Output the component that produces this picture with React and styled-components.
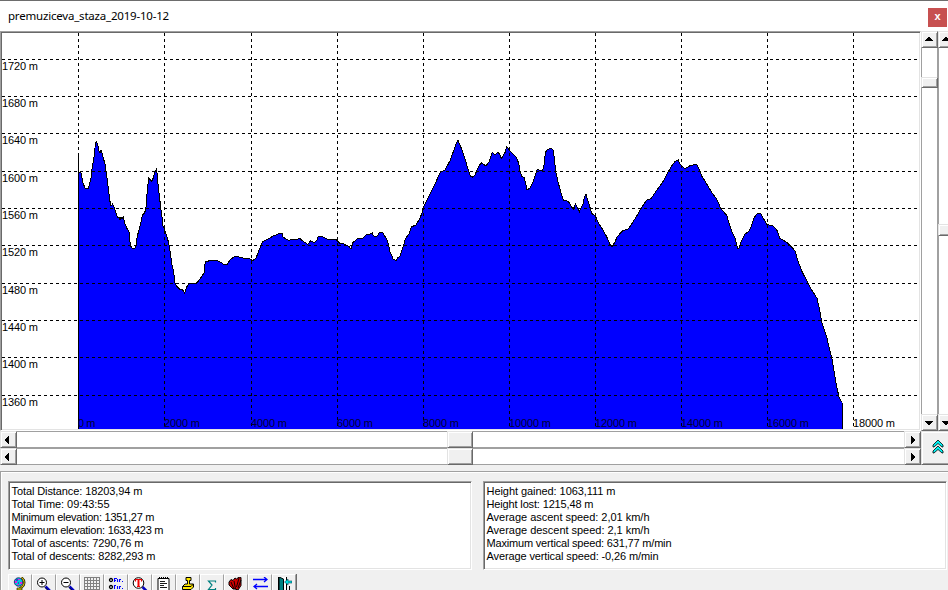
import React from "react";
import styled, { createGlobalStyle, css } from "styled-components";

const X_TICKS = [78, 164, 251, 337, 423, 509, 595, 681, 767, 853];
const Y_TICKS = [59, 96, 133, 171, 208, 245, 283, 320, 357, 395];
const TOP_ELEVATION = 1720;

const PROFILE = `79,172 81,173 83,183 85,188 88,189 89,186 91,178 92,169 94,157 95.5,143 96.5,141.5 98,146
 99,151 100,153 101,150 102,153 103.3,158 105,164 106.7,176 108.3,188 109.7,200 111,206 112.7,204 114,207 116,213
 117.3,217 119,217 120,220 121,217 122,219 123.3,217 125,224 126.7,228 129,232 130.3,245 131.7,248 134.7,249 136,245
 137.3,236 139,230 140.7,224 142.3,215 144.7,213 146,207 147.3,190 148.7,178 151.7,181 153.3,178
 154.7,172 156.7,168.5 157.3,177 158.7,190 160.3,204 162,217 163,226 164.7,230 166.7,236 168.7,243
 170.3,253 172,265 173.7,272 175,283 176.7,286 179.3,289 182.7,290 184.7,293 186.7,287 188.7,284
 196.7,283 200,279 204,273 205.3,262 211.7,260 216.7,260 223.3,264 226.7,265 230,260 235,256
 243,258 250,259 252.7,260.7 256,258.3 258.7,250.7 261.3,245 262.7,241.7 268.3,239 273.3,236
 278.3,234 282.3,233.3 283,237 288.3,240.3 300,238.7 303.3,241.3 307.7,244.3 310.7,240.7 314,242.7
 316.7,240.7 318,236.7 321.7,236.3 327.3,239.3 336,239.3 339.3,243 345,244.3 348.7,246.3 351,249
 353,242.3 357.3,239 362.7,238.3 366,235 370,234 372.3,232.7 373.3,235.7 376.7,236.7 379.3,232.7
 382.7,232.3 384.7,236 387.3,240.7 389,246.7 390,252 392,256 393.3,259.3 396,260.7 397.7,258
 400,256 402,250 403.7,245 405.3,238.7 409.3,233.3 411.3,226.7 415.7,225.3 419.3,219.3 422,213.3
 423.3,207.3 427.3,199.3 431.7,190.7 436,181.7 440,172.7 445,170 450,160.7 453.3,151.7 456.7,142.3
 458,140.5 460.7,146.7 463.3,154 466,162.3 468.3,170 470.3,176 472.3,177.3 475,175 477.7,168.3
 481,162.7 486,166 489,161.7 490.7,157.3 492.3,152.3 495,154.7 497.7,152.3 500,154.7 501.3,158.3
 503.3,155.7 505.3,152 506.7,146.7 510,150.7 512.7,154 516.7,158 518.7,163.3 520,170.7 521.7,176.7
 524,177.3 525.7,183.3 527,190 530,188 532.7,182.7 535,176 537.3,169.3 540,170.7 542.7,170.7
 544,165 545.3,153.3 546.7,150 550.7,148.3 553.3,150 554.3,158.3 555.7,171.7 558,181.7 560.7,191.7
 563.3,200 568.3,201.3 571,206 573.3,209.3 575.3,204 577.7,208.3 579.3,212 581.3,207.3 583,204
 584.3,197.7 586,194 587,198.3 589.3,205 591.7,213.3 595.3,216 598.7,223.3 603.3,230.7 606.7,236.7
 610,244.7 612.3,246.7 615,241.7 617.3,236.7 622.7,230.7 628.3,229 631.7,224 636.7,216 641.7,207.3
 646.7,200 651,198.7 655,192.7 660,186 664,180 667.7,172.7 671.7,166 675,161.3 678.3,160 680,164.3
 685,168.7 690,165.7 696.7,164.3 699,169.3 701.7,176 706,182.7 711,191.3 716.7,199 720.7,208.3
 726.7,215.3 729,223.3 731.7,231 735,238.3 737.7,248.3 739,248.5 740.7,242.7 745,234 748.7,231.7
 751.7,225.3 754.3,217.3 757.7,213.3 761,214 763.3,218.3 766.7,224.3 773.3,226 777.3,230.7
 779.7,238.3 786.7,242.3 792.7,248 795,251 797.7,260 801.7,271 807.3,281.7 811.7,290 817,298.3
 820,311.7 822,323.3 826.7,336.7 829.3,348.3 832.3,360 834.3,373.3 836.7,386.7 839.3,398.3
 842,402.3`;

const DISTANCE_STATS = [
  ["Total Distance: 18203,94 m", 131],
  ["Total Time: 09:43:55", 98],
  ["Minimum elevation: 1351,27 m", 143],
  ["Maximum elevation: 1633,423 m", 152],
  ["Total of ascents: 7290,76 m", 132],
  ["Total of descents: 8282,293 m", 144],
];

const SPEED_STATS = [
  ["Height gained: 1063,111 m", 129],
  ["Height lost: 1215,48 m", 107],
  ["Average ascent speed: 2,01 km/h", 163],
  ["Average descent speed: 2,1 km/h", 163],
  ["Maximum vertical speed: 631,77 m/min", 185],
  ["Average vertical speed: -0,26 m/min", 172],
];

const Lens = ({ children }) => (
  <>
    <path d="M9.500 9.500l5 5" stroke="#0000c0" strokeWidth="2.6" />
    <path d="M9 10.500l4 4" stroke="#000" strokeWidth=".8" />
    <circle cx="6" cy="5.500" r="4.5" fill="#fff" stroke="#000" />
    {children}
  </>
);

const ICONS = {
  globe: (
    <>
      <path d="M9.500 .5q4.500 4 1.500 8.500l-3 2.500" fill="none" stroke="#000" strokeWidth="2.4" />
      <path d="M9.500 .5q4.500 4 1.500 8.500l-3 2.500" fill="none" stroke="#d8c800" strokeWidth="1.2" />
      <circle cx="6.500" cy="5" r="4.200" fill="#00c8d8" stroke="#202070" strokeWidth=".9" />
      <path d="M3 4h2v2h-2zM6 2h2v1h-2zM8 5h2v2h-2zM5 7h2v1h-2z" fill="#e020e0" />
      <path d="M4 2h2v2h-2zM6 5h1v2h-1z" fill="#2050d0" />
      <path d="M5 11h5v2h-5z" fill="#e0d000" stroke="#000" strokeWidth=".6" />
    </>
  ),
  zoomIn: (
    <Lens>
      <path d="M3.5 5.500h5M6 3v5" stroke="#000" />
    </Lens>
  ),
  zoomOut: (
    <Lens>
      <path d="M3.5 5.500h5" stroke="#000" />
    </Lens>
  ),
  grid: (
    <path
      d="M0 .5h16M0 3.5h16M0 6.5h16M0 9.5h16M0 12.5h16M.5 0v16M3.5 0v16M6.5 0v16M9.5 0v16M12.5 0v16M15.5 0v16"
      stroke="#808080"
    />
  ),
  list: (
    <>
      <circle cx="3" cy="3" r="1.5" fill="#fff" stroke="#000" strokeWidth="1.3" />
      <circle cx="3" cy="10" r="1.5" fill="#fff" stroke="#000" strokeWidth="1.3" />
      <path
        d="M6.5 1v4M7 1.5h2M7 3.500h1M9.500 2v3M11.500 2v3M12 2.500h1M14 4.500h1M6.500 8v4M7 8.500h1M9.500 9v3M11.500 9v3M12 9.500h1M14 11.500h1"
        fill="none"
        stroke="#0000ff"
        strokeWidth="1.1"
      />
    </>
  ),
  textZoom: (
    <>
      <path d="M10.500 10l4 4" stroke="#0000c0" strokeWidth="2.6" />
      <circle cx="6.500" cy="6" r="5.300" fill="#fff" stroke="#000" />
      <path d="M6.500 2v8" stroke="#f00000" strokeWidth="2" />
      <path d="M3.500 4.500V2.500h6v2M5 9.500h3" fill="none" stroke="#f00000" strokeWidth="1.2" />
    </>
  ),
  notes: (
    <>
      <path d="M2 1.500h11v14H2z" fill="#fff" stroke="#000" />
      <path d="M3.500 0v2M5.500 0v2M7.500 0v2M9.500 0v2M11.500 0v2" stroke="#000" />
      <path d="M4 4.5h5M4 6.5h7M4 8.5h4M4 10.5h7" stroke="#000" strokeWidth=".9" />
    </>
  ),
  stamp: (
    <>
      <path d="M6 .5h5v3h-1.500v3.500h4v3l-2.500 2.500h-8.500v-3l2.500-2.500h2.500v-3.500h-1.500z" fill="#ffe800" stroke="#000" />
      <path d="M2.500 9.500h8.500l2.500-2.500" fill="none" stroke="#000" />
    </>
  ),
  sum: (
    <path d="M11.5 5.500V4H4.500l3.500 4-3.500 4.500h7V11" fill="none" stroke="#008080" strokeWidth="1.2" />
  ),
  wings: (
    <>
      <path
        d="M1 5l2-2.500 2 1 2-2.500 1.500 1 2.500-2 2 .5v8l-3 4.500-3-1-2 0-4-4z"
        fill="#d00000"
        stroke="#000"
      />
      <path d="M3 5l3 7M6 4l1.500 8M11 1L8.500 10M13 3l-3 8" stroke="#000" strokeWidth=".9" />
    </>
  ),
  swap: (
    <path
      d="M1 2.500h14M12 0L15 2.500l-3 2.500M16 9.500H2M5 7L2 9.500l3 2.500"
      fill="none"
      stroke="#0000ff"
      strokeWidth="1.3"
    />
  ),
  exit: (
    <>
      <path d="M2.500 -.5h8v16h-8z" fill="#fff" stroke="#000" />
      <path d="M3 0l4.500 2v13H3z" fill="#008080" stroke="#000" />
      <path d="M8.500 5l3.500-3v2H16v2h-4v2z" fill="#00e0e0" stroke="#004050" strokeWidth=".6" />
      <path d="M10.500 9v7M13.500 9v7" stroke="#000" />
    </>
  ),
};

const ARROWS = {
  up: "M1 6h8v-1h-1v-1h-1v-1h-1v-1h-2v1h-1v1h-1v1h-1z",
  down: "M1 3h8v1h-1v1h-1v1h-1v1h-2v-1h-1v-1h-1v-1h-1z",
  left: "M6 1v8h-1v-1h-1v-1h-1v-1h-1v-2h1v-1h1v-1h1v-1z",
  right: "M4 1v8h1v-1h1v-1h1v-1h1v-2h-1v-1h-1v-1h-1v-1z",
};

function Arrow({ dir }) {
  return (
    <svg width="10" height="10" shapeRendering="crispEdges">
      <path d={ARROWS[dir]} />
    </svg>
  );
}

function ScrollBar({ vertical, before, thumb }) {
  return (
    <Track $vertical={vertical}>
      <ScrollButton>
        <Arrow dir={vertical ? "up" : "left"} />
      </ScrollButton>
      <Spacer $size={before} />
      <Thumb $size={thumb} />
      <Spacer />
      <ScrollButton>
        <Arrow dir={vertical ? "down" : "right"} />
      </ScrollButton>
    </Track>
  );
}

function ElevationChart() {
  return (
    <ChartFrame>
      <svg width="917" height="396" viewBox="2 33 917 396">
        <g shapeRendering="crispEdges">
          <polygon points={`78.5,429 ${PROFILE} 842,429`} fill="#0000ff" />
          <polyline
            points={`78.5,429 78.5,153 78.5,172 ${PROFILE} 842.5,429`}
            fill="none"
            stroke="#000"
          />
          {Y_TICKS.map((y) => (
            <GridLine key={y} x1="2" x2="917" y1={y + 0.5} y2={y + 0.5} />
          ))}
          {X_TICKS.map((x) => (
            <GridLine key={x} x1={x + 0.5} x2={x + 0.5} y1="33" y2="427" />
          ))}
        </g>
        {Y_TICKS.map((y, i) => (
          <AxisText key={y} x="2" y={y + 11} textLength="36">
            {TOP_ELEVATION - i * 40} m
          </AxisText>
        ))}
        {X_TICKS.map((x, i) => (
          <AxisText
            key={x}
            x={x}
            y="427"
            $dim={i < 9}
            textLength={i === 0 ? 17.5 : i < 5 ? 36 : 42}
          >
            {i * 2000} m
          </AxisText>
        ))}
      </svg>
    </ChartFrame>
  );
}

function StatsBox({ rows }) {
  return (
    <Stats>
      {rows.map(([text, width]) => (
        <StatRow key={text}>
          <text x="-0.500" y="10" textLength={width}>
            {text}
          </text>
        </StatRow>
      ))}
    </Stats>
  );
}

export default function App() {
  return (
    <Window>
      <GlobalStyle />
      <TitleBar>
        <Title>premuziceva_staza_2019-10-12</Title>
        <CloseButton>x</CloseButton>
      </TitleBar>
      <ChartRow>
        <ElevationChart />
        <ScrollBar vertical before={29} thumb={11} />
        <ScrollBar vertical before={176} thumb={12} />
      </ChartRow>
      <BottomRow>
        <HorizontalBars>
          <ScrollBar before={430} thumb={26} />
          <ScrollBar before={430} thumb={26} />
        </HorizontalBars>
        <CollapseButton>
          <svg width="12" height="16" viewBox="0 0 12 16">
            <path
              d="M1 6L6 1l5 5v2l-1 0-4-3.500-4 3.500-1 0zM1 12l5-5 5 5v2l-1 0-4-3.500-4 3.500-1 0z"
              fill="#00f0f0"
              stroke="#000"
              strokeWidth=".8"
            />
          </svg>
        </CollapseButton>
      </BottomRow>
      <InfoPanel>
        <StatsRow>
          <StatsBox rows={DISTANCE_STATS} />
          <StatsBox rows={SPEED_STATS} />
        </StatsRow>
        <ToolBar>
          {Object.keys(ICONS).map((name) => (
            <ToolButton key={name}>
              <svg width="16" height="16">
                {ICONS[name]}
              </svg>
            </ToolButton>
          ))}
        </ToolBar>
      </InfoPanel>
    </Window>
  );
}

const GlobalStyle = createGlobalStyle`
  * {
    box-sizing: border-box;
  }
  body {
    margin: 0;
    overflow: hidden;
  }
  svg {
    display: block;
    flex: none;
  }
`;

const raised = css`
  flex: none;
  background: #f0f0f0;
  border: 1px solid;
  border-color: #e3e3e3 #696969 #696969 #e3e3e3;
  box-shadow: inset 1px 1px #fff, inset -1px -1px #a0a0a0;
`;

const sunken = css`
  flex: none;
  background: #fff;
  border: 1px solid;
  border-color: #a0a0a0 #fff #fff #a0a0a0;
  box-shadow: inset 1px 1px #696969, inset -1px -1px #e3e3e3;
`;

const Window = styled.div`
  width: 948px;
  height: 590px;
  overflow: hidden;
  display: flex;
  flex-direction: column;
  background: #f0f0f0;
  font-family: "Liberation Sans", Arial, sans-serif;
  color: #000;
`;

const TitleBar = styled.div`
  flex: none;
  height: 31px;
  display: flex;
  justify-content: space-between;
  align-items: flex-start;
  padding: 7px 1px 0 8px;
  background: #fff;
  border-top: 1px solid #6d6d6d;
`;

const Title = styled.div`
  font-family: "Noto Sans", sans-serif;
  font-size: 11.5px;
  line-height: 16px;
  letter-spacing: -0.2px;
`;

const CloseButton = styled.div`
  width: 19px;
  height: 19px;
  background: #c75050;
  color: #fff;
  font-size: 11px;
  font-weight: bold;
  line-height: 17px;
  text-align: center;
`;

const ChartRow = styled.div`
  flex: none;
  display: flex;
  height: 400px;
`;

const ChartFrame = styled.div`
  ${sunken}
  width: 921px;
  padding: 1px;
`;

const GridLine = styled.line`
  stroke: #000;
  stroke-dasharray: 3 3;
`;

const AxisText = styled.text`
  font-size: 11px;
  fill: ${({ $dim }) => ($dim ? "#000030" : "#000")};
`;

const Track = styled.div`
  flex: none;
  display: flex;
  background: #fff;
  ${({ $vertical }) =>
    $vertical
      ? css`
          flex-direction: column;
          width: 17px;
          box-shadow: inset 1px 0 #a0a0a0, inset -1px 0 #a0a0a0;
        `
      : css`
          height: 17px;
          box-shadow: inset 0 1px #a0a0a0, inset 0 -1px #a0a0a0;
        `}
`;

const ScrollButton = styled.div`
  ${raised}
  width: 17px;
  height: 17px;
  padding: 3px 0 0 2px;
`;

const Spacer = styled.div`
  flex: ${({ $size }) => ($size ? `0 0 ${$size}px` : 1)};
`;

const Thumb = styled.div`
  ${raised}
  flex: 0 0 ${({ $size }) => $size}px;
`;

const BottomRow = styled.div`
  flex: none;
  display: flex;
  height: 34px;
`;

const HorizontalBars = styled.div`
  flex: none;
  width: 921px;
`;

const CollapseButton = styled.div`
  ${raised}
  width: 34px;
  padding: 7px 0 0 10px;
`;

const InfoPanel = styled.div`
  flex: none;
  height: 130px;
  margin-top: 6px;
  padding: 8px 0 0 6px;
  border: 1px solid #a0a0a0;
  border-width: 1px 0 0 1px;
  box-shadow: inset 1px 1px #fff;
`;

const StatsRow = styled.div`
  display: flex;
  gap: 11px;
  padding: 1px 0 0 1px;
`;

const Stats = styled.div`
  ${sunken}
  width: 464px;
  height: 89px;
  padding: 3px 0 0 3px;
`;

const StatRow = styled.svg`
  width: 300px;
  height: 13px;
  overflow: visible;
  font-size: 11px;
`;

const ToolBar = styled.div`
  display: flex;
  width: 289px;
  margin: 4px 0 0 1px;
  border-right: 1px solid #696969;
`;

const ToolButton = styled.div`
  width: 24px;
  height: 24px;
  padding: 2px 0 0 3px;
  border: 1px solid;
  border-color: #fff #a0a0a0 #a0a0a0 #fff;
`;
